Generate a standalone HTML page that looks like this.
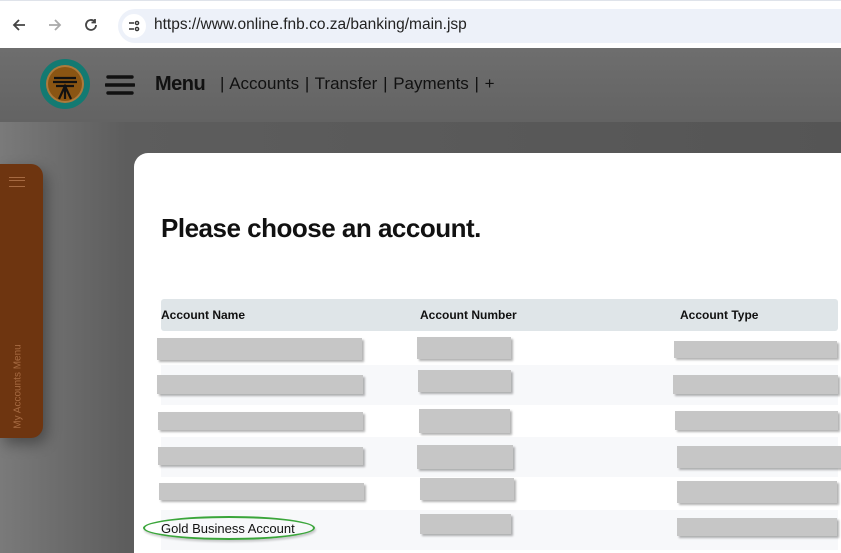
<!DOCTYPE html>
<html><head><meta charset="utf-8"><style>
*{margin:0;padding:0;box-sizing:border-box}
body{width:841px;height:550px;overflow:hidden;position:relative;font-family:"Liberation Sans",sans-serif;background:linear-gradient(90deg,#7a7a7a 0%,#5d5d5d 15%,#555 100%)}
.chrome{position:absolute;left:0;top:0;width:841px;height:48px;background:#fff;border-top:1px solid #dfe3ea}
.url{position:absolute;left:118px;top:8px;width:723px;height:34px;background:#edf1f9;border-radius:17px 0 0 17px}
.url span{position:absolute;left:36px;top:7px;font-size:15.5px;color:#222}
.top{position:absolute;left:0;top:48px;width:841px;height:74px;background:linear-gradient(180deg,#6e6e6e,#636363)}
.side{position:absolute;left:0;top:164px;width:43px;height:274px;background:#6e3510;border-radius:0 12px 12px 0;box-shadow:4px 6px 14px rgba(0,0,0,.35)}
.side .t{position:absolute;left:-37px;top:217px;transform:rotate(-90deg);font-size:10px;color:#a66a42;white-space:nowrap;width:110px;text-align:center}
.card{position:absolute;left:134px;top:153px;width:707px;height:400px;background:#fff;border-radius:14px 0 0 0}
h1{position:absolute;left:161px;top:213px;font-size:26px;font-weight:bold;color:#111;letter-spacing:-.5px}
.th{position:absolute;left:161px;top:299px;width:677px;height:32px;background:#dfe5e8;border-radius:3px}
.th b{position:absolute;top:9px;font-size:12px;color:#111}
.stripe{position:absolute;left:161px;width:677px;background:#f7f8fa}
.g{position:absolute;background:#c6c6c6;box-shadow:2px 2px 2px rgba(0,0,0,.3)}
</style></head><body>
<div class="chrome">
<svg style="position:absolute;left:10px;top:15px" width="18" height="18" viewBox="0 0 18 18"><path d="M15 9H4M9 4L4 9l5 5" stroke="#444" stroke-width="1.8" fill="none"/></svg>
<svg style="position:absolute;left:46px;top:15px" width="18" height="18" viewBox="0 0 18 18"><path d="M3 9h11M9 4l5 5-5 5" stroke="#aaa" stroke-width="1.8" fill="none"/></svg>
<svg style="position:absolute;left:82px;top:15px" width="18" height="18" viewBox="0 0 18 18"><path d="M14 9a5 5 0 1 1-1.5-3.6M13 3v3.5H9.5" stroke="#444" stroke-width="1.8" fill="none"/></svg>
<div class="url"><svg style="position:absolute;left:4px;top:5px" width="24" height="24" viewBox="0 0 24 24"><circle cx="12" cy="12" r="12" fill="#fff"/><path d="M7 9h5M7 15h5" stroke="#333" stroke-width="1.6"/><circle cx="15" cy="9" r="1.6" fill="none" stroke="#333" stroke-width="1.4"/><circle cx="15" cy="15" r="1.6" fill="none" stroke="#333" stroke-width="1.4"/></svg><span>https://www.online.fnb.co.za/banking/main.jsp</span></div>
</div>
<div class="top">
<svg style="position:absolute;left:40px;top:11px" width="50" height="50" viewBox="0 0 50 50"><circle cx="25" cy="25" r="25" fill="#137a72"/><circle cx="25" cy="25" r="19" fill="#ad7a3c"/><circle cx="25" cy="25" r="17" fill="#8a5513"/><path d="M14 19h22M13 23h24M16 27h18M25 27v13M19 40l6-13 6 13" stroke="#111" stroke-width="2.2" fill="none"/></svg>
<svg style="position:absolute;left:105px;top:26px" width="30" height="22" viewBox="0 0 30 22"><path d="M3 3h24M1 11h28M3 19h24" stroke="#111" stroke-width="3.4" stroke-linecap="round"/></svg>
<div style="position:absolute;left:155px;top:25px;font-size:20px;color:#111;font-weight:bold;letter-spacing:-.5px">Menu</div>
<div style="position:absolute;left:220px;top:26px;font-size:17px;color:#111;white-space:nowrap;word-spacing:1px">| Accounts | Transfer | Payments | +</div>
</div>
<div class="side"><div style="position:absolute;left:9px;top:13px;width:16px;height:10px;border-top:1px solid #a66a42;border-bottom:1px solid #a66a42"><div style="height:3px;border-bottom:1px solid #a66a42"></div></div><div class="t">My Accounts Menu</div></div>
<div class="card"></div>
<h1>Please choose an account.</h1>
<div class="th"><b style="left:0">Account Name</b><b style="left:259px">Account Number</b><b style="left:519px">Account Type</b></div>
<div class="stripe" style="top:365px;height:40px"></div>
<div class="stripe" style="top:437px;height:40px"></div>
<div class="stripe" style="top:510px;height:40px"></div>
<div class="g" style="left:157px;top:338px;width:205px;height:22px"></div>
<div class="g" style="left:157px;top:375px;width:206px;height:19px"></div>
<div class="g" style="left:158px;top:412px;width:205px;height:18px"></div>
<div class="g" style="left:158px;top:447px;width:205px;height:18px"></div>
<div class="g" style="left:159px;top:483px;width:205px;height:17px"></div>
<div class="g" style="left:417px;top:337px;width:94px;height:22px"></div>
<div class="g" style="left:418px;top:370px;width:93px;height:22px"></div>
<div class="g" style="left:419px;top:409px;width:91px;height:24px"></div>
<div class="g" style="left:417px;top:445px;width:96px;height:24px"></div>
<div class="g" style="left:420px;top:478px;width:94px;height:22px"></div>
<div class="g" style="left:420px;top:514px;width:91px;height:20px"></div>
<div class="g" style="left:674px;top:341px;width:163px;height:17px"></div>
<div class="g" style="left:673px;top:375px;width:165px;height:19px"></div>
<div class="g" style="left:675px;top:411px;width:163px;height:19px"></div>
<div class="g" style="left:677px;top:446px;width:164px;height:22px"></div>
<div class="g" style="left:677px;top:481px;width:160px;height:22px"></div>
<div class="g" style="left:677px;top:518px;width:160px;height:18px"></div>
<div style="position:absolute;left:161px;top:521px;font-size:13px;color:#111">Gold Business Account</div>
<div style="position:absolute;left:143px;top:516px;width:172px;height:24px;border:2px solid #3aa53a;border-radius:50%;box-shadow:1px 2px 2px rgba(0,0,0,.2)"></div>
</body></html>
